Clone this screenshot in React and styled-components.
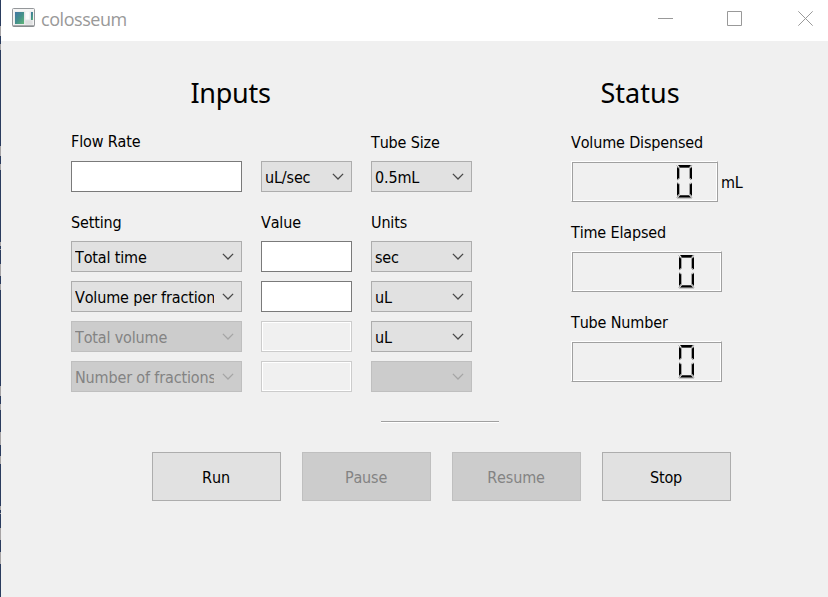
import React from 'react';
import styled, { createGlobalStyle, css } from 'styled-components';

const GlobalStyle = createGlobalStyle`
  * { box-sizing: border-box; }
  body {
    margin: 0;
    overflow: hidden;
    background: #f0f0f0;
    color: #000;
    font-family: "DejaVu Sans", "Noto Sans", sans-serif;
    font-stretch: condensed;
    font-kerning: none;
    font-size: 16px;
    line-height: 20px;
    letter-spacing: -0.15px;
  }
`;

const Screen = styled.div`
  display: flex;
  width: 828px;
  height: 597px;
`;

const mark = (a, b) => `#a7a4a5 ${a}px ${b}px`;
const marks = [
  [26, 36], [44, 50], [146, 156], [164, 170], [242, 246], [249, 250], [264, 276],
  [284, 290], [386, 396], [404, 410], [432, 445], [456, 464], [506, 510], [513, 514],
  [528, 540], [552, 564],
];
const stripes = marks.map(([a, b]) => `#2a3c5e ${a}px, ${mark(a, b)}, #2a3c5e ${b}px`).join(', ');

const DesktopEdge = styled.div`
  width: 1px;
  background: linear-gradient(to bottom, #2a3c5e 0, ${stripes}, #2a3c5e 597px);
`;

const Window = styled.div`
  flex: 1;
  display: flex;
  flex-direction: column;
`;

const TitleBar = styled.header`
  display: flex;
  height: 41px;
  padding: 8px 15px 0 11px;
  background: #fff;
`;

const Title = styled.span`
  margin-left: 6px;
  margin-top: -1px;
  color: #999;
  font: 18px/25px "Open Sans", "Noto Sans", sans-serif;
  letter-spacing: -0.45px;
`;

const WindowControls = styled.div`
  display: flex;
  gap: 54px;
  margin: 3px 0 0 auto;
  svg { display: block; }
  svg:last-child { margin-left: 2px; }
`;

const Content = styled.main`
  padding: 33px 0 0 70px;
`;

const Panels = styled.div`
  display: flex;
  gap: 99px;
`;

const Inputs = styled.section`
  width: 401px;
`;

const Status = styled.section`
  width: 180px;
`;

const Heading = styled.h1`
  margin: 0;
  height: 38px;
  padding-left: ${(p) => p.$indent}px;
  font: 400 27px/38px "Noto Sans", sans-serif;
  letter-spacing: ${(p) => p.$spacing}px;
`;

const FieldGrid = styled.div`
  display: grid;
  grid-template-columns: 171px 91px 101px;
  column-gap: 19px;
`;

const FlowGrid = styled(FieldGrid)`
  margin-top: 19px;
  grid-template-rows: 30px 31px;
`;

const SettingsGrid = styled(FieldGrid)`
  margin-top: 20px;
  grid-template-rows: 20px repeat(4, 31px);
  row-gap: 9px;
`;

const Label = styled.div`
  height: 20px;
  padding-top: ${(p) => p.$drop || 1}px;
  white-space: nowrap;
`;

const fieldBox = css`
  height: 31px;
  border: 1px solid;
`;

const Input = styled.div`
  ${fieldBox}
  border-color: ${(p) => (p.$disabled ? '#ccc' : '#7a7a7a')};
  background: ${(p) => (p.$disabled ? '#f0f0f0' : '#fff')};
  box-shadow: ${(p) => (p.$disabled ? 'inset 0 0 0 1px #fff' : 'none')};
`;

const SelectBox = styled.div`
  ${fieldBox}
  display: flex;
  align-items: center;
  justify-content: space-between;
  padding: 3px 7px 0 3px;
  border-color: ${(p) => (p.$disabled ? '#bfbfbf' : '#adadad')};
  background: ${(p) => (p.$disabled ? '#ccc' : '#e1e1e1')};
  color: ${(p) => (p.$disabled ? '#838383' : '#000')};
`;

const SelectText = styled.span`
  flex: 1;
  min-width: 0;
  margin-right: 8px;
  overflow: hidden;
  white-space: nowrap;
`;

const Arrow = styled.svg`
  display: block;
  flex: none;
  margin-top: -3px;
  fill: none;
  stroke: ${(p) => (p.$disabled ? '#a5a5a5' : '#484848')};
  stroke-width: 1.3;
`;

function Select({ disabled, children }) {
  return (
    <SelectBox $disabled={disabled}>
      <SelectText>{children}</SelectText>
      <Arrow $disabled={disabled} width="12" height="7" viewBox="0 0 12 7">
        <path d="M.9.9 6 6 11.1.9" />
      </Arrow>
    </SelectBox>
  );
}

const Readout = styled.div`
  margin-top: 20px;
`;

const ReadoutRow = styled.div`
  display: flex;
  align-items: center;
  gap: 3px;
  margin-top: 9px;
`;

const LcdFrame = styled.div`
  display: flex;
  justify-content: flex-end;
  width: ${(p) => p.$width}px;
  height: 41px;
  padding: 2px ${(p) => p.$inset}px 0 0;
  border: 1px solid;
  border-color: #fff #a0a0a0 #a0a0a0 #fff;
  box-shadow: inset 1px 1px #a0a0a0, inset -1px -1px #fff;
`;

function Lcd({ width, inset }) {
  return (
    <LcdFrame $width={width} $inset={inset} role="img" aria-label="0">
      <svg width="17" height="35" viewBox="0 0 17 35">
        <g fill="none" stroke="#a0a0a0">
          <path d="M.5 1.5 3.5 4.5V14.5L1 16M16 1 13.5 4.5V14.5L15 16M3 3.5H14M1 18.5 3.5 20V30.5L.5 33.5M15 18.5 13.5 20V30.5L16 33.5M1 34H16" />
        </g>
        <g fill="#000">
          <path d="M2 1H15L13 3.4H4ZM1 3 3 4.5V14L1 15.6ZM16 3 14 4.5V14L16 15.6ZM1 19 3 20.5V30L1 32ZM16 19 14 20.5V30L16 32ZM4 31.3H13L15 33.5H2Z" />
        </g>
      </svg>
    </LcdFrame>
  );
}

const Divider = styled.div`
  width: 118px;
  height: 2px;
  margin: 29px 0 0 310px;
  border-top: 1px solid #a0a0a0;
  border-bottom: 1px solid #fff;
`;

const Actions = styled.div`
  display: flex;
  gap: 21px;
  margin: 29px 0 0 81px;
`;

const Button = styled.button`
  width: 129px;
  height: 49px;
  padding: 2px 1px 0 0;
  border: 1px solid ${(p) => (p.disabled ? '#bfbfbf' : '#adadad')};
  background: ${(p) => (p.disabled ? '#ccc' : '#e1e1e1')};
  color: ${(p) => (p.disabled ? '#838383' : '#000')};
  font: inherit;
  letter-spacing: inherit;
`;

function AppIcon() {
  return (
    <svg width="23" height="19" viewBox="0 0 23 19">
      <defs>
        <linearGradient id="pane" x1="0" y1="0" x2="1" y2="1">
          <stop offset="0" stopColor="#4275a5" />
          <stop offset=".5" stopColor="#438f8b" />
          <stop offset="1" stopColor="#61b878" />
        </linearGradient>
      </defs>
      <rect x=".5" y=".5" width="22" height="18" rx="1" fill="#f5f5f5" stroke="#94979a" />
      <path d="M1 17.9H22" stroke="#777b7e" />
      <rect x="2.5" y="3.5" width="18" height="13" fill="#e5e7e8" />
      <rect x="3" y="4" width="9" height="12" fill="url(#pane)" />
      <rect x="13.5" y="3.5" width="4" height="8" fill="#fafafa" />
      <rect x="13.5" y="12.5" width="7" height="4" fill="#dedfe0" />
      <rect x="19" y="4" width="2" height="8" fill="url(#pane)" />
    </svg>
  );
}

export default function App() {
  return (
    <Screen>
      <GlobalStyle />
      <DesktopEdge />
      <Window>
        <TitleBar>
          <AppIcon />
          <Title>colosseum</Title>
          <WindowControls>
            <svg width="15" height="15" fill="none" stroke="#999"><path d="M0 7.5H15" /></svg>
            <svg width="15" height="15" fill="none" stroke="#999"><path d="M.5.5H14.5V14.5H.5Z" /></svg>
            <svg width="15" height="15" fill="none" stroke="#999"><path d="M.3.3 14.7 14.7M14.7.3.3 14.7" /></svg>
          </WindowControls>
        </TitleBar>
        <Content>
          <Panels>
            <Inputs>
              <Heading $indent={119.5} $spacing={-0.3}>Inputs</Heading>
              <FlowGrid>
                <Label>Flow Rate</Label>
                <span />
                <Label $drop={2}>Tube Size</Label>
                <Input />
                <Select>uL/sec</Select>
                <Select>0.5mL</Select>
              </FlowGrid>
              <SettingsGrid>
                <Label>Setting</Label>
                <Label>Value</Label>
                <Label>Units</Label>
                <Select>Total time</Select>
                <Input />
                <Select>sec</Select>
                <Select>Volume per fraction</Select>
                <Input />
                <Select>uL</Select>
                <Select disabled>Total volume</Select>
                <Input $disabled />
                <Select>uL</Select>
                <Select disabled>Number of fractions</Select>
                <Input $disabled />
                <Select disabled />
              </SettingsGrid>
            </Inputs>
            <Status>
              <Heading $indent={29.5} $spacing={0}>Status</Heading>
              <Readout>
                <Label>Volume Dispensed</Label>
                <ReadoutRow>
                  <Lcd width={147} inset={24} />
                  <Label>mL</Label>
                </ReadoutRow>
              </Readout>
              <Readout>
                <Label>Time Elapsed</Label>
                <ReadoutRow><Lcd width={151} inset={26} /></ReadoutRow>
              </Readout>
              <Readout>
                <Label>Tube Number</Label>
                <ReadoutRow><Lcd width={151} inset={26} /></ReadoutRow>
              </Readout>
            </Status>
          </Panels>
          <Divider />
          <Actions>
            <Button>Run</Button>
            <Button disabled>Pause</Button>
            <Button disabled>Resume</Button>
            <Button>Stop</Button>
          </Actions>
        </Content>
      </Window>
    </Screen>
  );
}
